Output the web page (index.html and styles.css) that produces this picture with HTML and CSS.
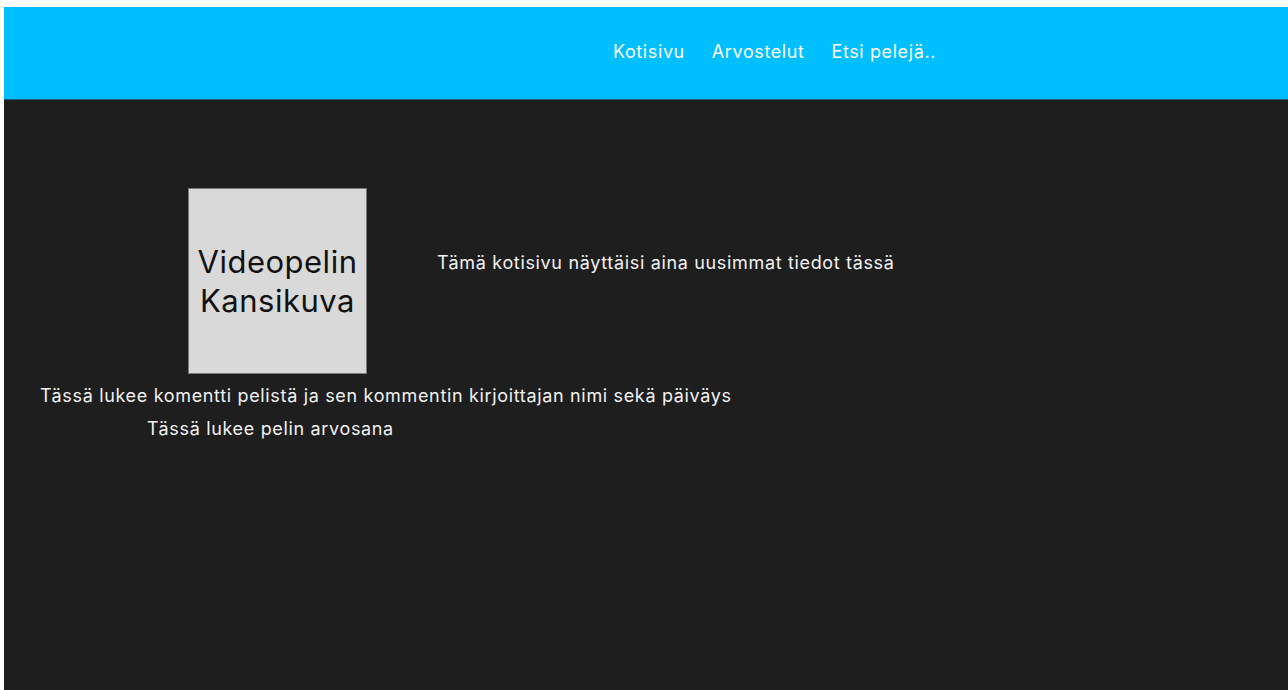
FILE: index.html
```html
<!DOCTYPE html>
<html lang="fi">
<head>
<meta charset="utf-8">
<title>Kotisivu</title>
<link rel="stylesheet" href="styles.css">
</head>
<body>
<div class="page">
  <header class="topbar">
    <nav class="nav">
      <a class="nav-link" href="#">Kotisivu</a>
      <a class="nav-link" href="#">Arvostelut</a>
      <a class="nav-link" href="#">Etsi pelejä..</a>
    </nav>
  </header>
  <main class="content">
    <section class="feature">
      <div class="cover">Videopelin<br>Kansikuva</div>
      <p class="news">Tämä kotisivu näyttäisi aina uusimmat tiedot tässä</p>
    </section>
    <p class="comment">Tässä lukee komentti pelistä ja sen kommentin kirjoittajan nimi sekä päiväys</p>
    <p class="rating">Tässä lukee pelin arvosana</p>
  </main>
</div>
</body>
</html>
```
FILE: styles.css
```css
html, body {
  margin: 0;
  height: 100%;
  background: #ffffff;
}

body {
  font-family: Inter, "Noto Sans", sans-serif;
  overflow: hidden;
}

.page {
  display: flex;
  flex-direction: column;
  height: 100%;
  padding: 7px 0 0 4px;
  box-sizing: border-box;
}

.topbar {
  height: 92px;
  background: #00bfff;
  border-bottom: 1px solid #14607c;
  display: flex;
  align-items: center;
  flex-shrink: 0;
}

.nav {
  display: flex;
  gap: 27px;
  padding-left: 609px;
  margin-top: -2px;
}

.nav-link {
  color: #ffffff;
  text-decoration: none;
  font-size: 18px;
  line-height: 22px;
  letter-spacing: 0.6px;
}

.content {
  flex: 1;
  background: #1e1e1e;
  color: #f2f2f2;
  padding-top: 88px;
  font-size: 18px;
  line-height: 22px;
  letter-spacing: 0.66px;
}

.feature {
  display: flex;
  align-items: flex-start;
  padding-left: 184px;
}

.cover {
  width: 177px;
  height: 184px;
  background: #d9d9d9;
  border: 1px solid #7a7a7a;
  color: #111111;
  font-size: 31px;
  line-height: 39px;
  letter-spacing: 0.5px;
  text-align: center;
  display: flex;
  align-items: center;
  justify-content: center;
}

.news {
  margin: 64px 0 0 70px;
}

.comment {
  margin: 11px 0 0 36px;
}

.rating {
  margin: 11px 0 0 143px;
}
```
